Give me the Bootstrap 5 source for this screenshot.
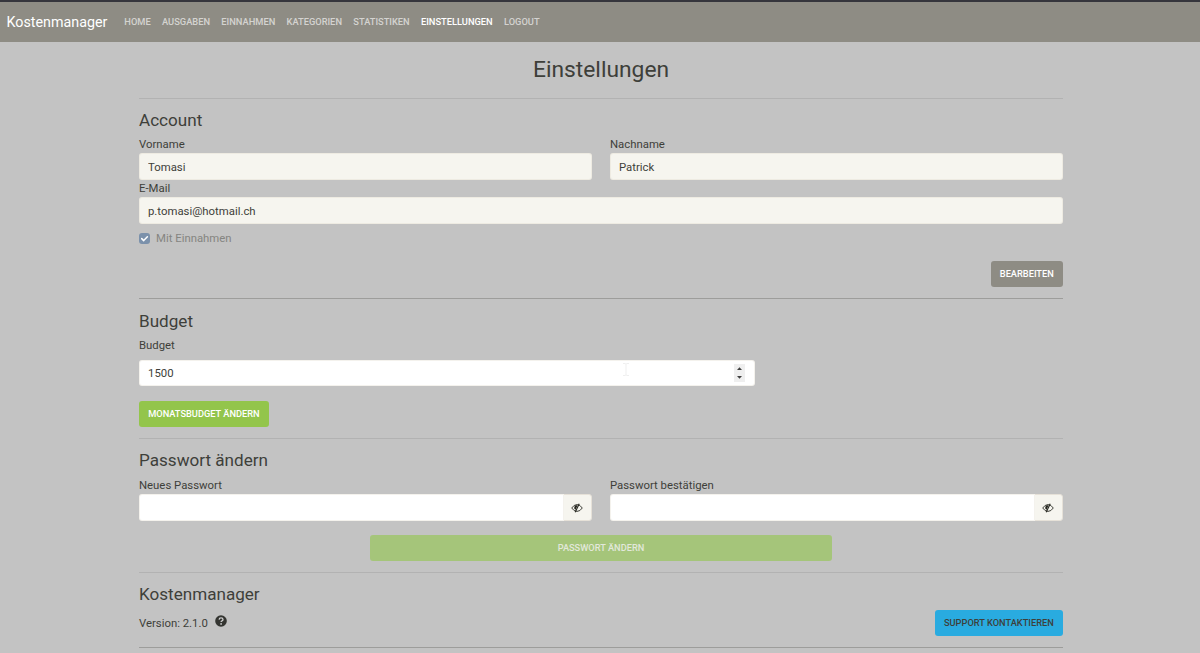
<!DOCTYPE html>
<html lang="de">
<head>
<meta charset="utf-8">
<meta name="viewport" content="width=device-width, initial-scale=1">
<title>Kostenmanager</title>
<link href="https://cdn.jsdelivr.net/npm/bootstrap@5.3.0/dist/css/bootstrap.min.css" rel="stylesheet">
<style>
  html { overflow: hidden; }
  body { font-family: Roboto, "Liberation Sans", sans-serif; font-size: 11.35px; line-height: 17px; color: #3e3f3a; background: #c3c3c3; }
  .topbar { height: 42px; padding: 0 6.5px; background: #8e8c84; border-top: 2px solid #35353c; }
  .topbar .navbar-brand { font-size: 14.3px; line-height: 20px; margin: 0 11.3px 0 0; padding: 0; color: #fff; }
  .topbar.navbar-expand .navbar-nav .nav-link { font-size: 9.3px; font-weight: 500; line-height: 14px; padding: 0 5.65px; color: rgba(255,255,255,.63); text-transform: uppercase; }
  .topbar.navbar-expand .navbar-nav .nav-link.active { color: #fff; }
  .page { width: 924px; margin-left: 139px; }
  h1 { font-size: 22.8px; font-weight: 400; line-height: 28px; padding-top: 14px; margin: 0 0 14px; }
  h2 { font-size: 17.1px; font-weight: 400; line-height: 20px; margin: 0; }
  .rule { height: 1px; margin: 0; border: 0; background: #b2b2b2; opacity: 1; }
  .rule-dark { background: #9d9d9b; }
  .pair { --bs-gutter-x: 18px; }
  label { display: block; line-height: 17px; }
  .form-control { height: 27px; padding: 0 8px; font-size: 11.35px; line-height: 17px; color: #3e3f3a; border: 1px solid #dfd7ca55; border-radius: 3px; background: #fff; }
  .form-control:disabled { background: #f6f5ef; color: #3e3f3a; opacity: 1; }
  input::-webkit-inner-spin-button { display: none; }
  .tick { width: 11px; height: 11px; border-radius: 3px; background: #7b91ab; }
  .btn { height: 26px; padding: 0 8.2px; font-size: 9.25px; font-weight: 500; line-height: 24px; border-radius: 3px; text-transform: uppercase; border-width: 1px; color: #fff; white-space: nowrap; }
  .btn-edit, .btn-edit:hover { background: #8e8c84; color: #fff; }
  .btn-green, .btn-green:disabled { background: #93c54b; color: #fff; border-color: transparent; }
  .btn-green:disabled { background: #a5c57a; color: #e2e8da; opacity: 1; }
  .btn-support { background: #29abe0; color: #3e3f3a; }
  .input-group-text { width: 29px; padding: 0 1px 0 0; border: 1px solid #e6e1d8; border-radius: 3px; background: #f6f5ef; justify-content: center; }
  .budget { width: 616px; height: 26px; }
  .spin { right: 10px; top: 4px; }
  .pointer { left: 483px; top: 3px; }
  .lh-row { height: 26px; }
</style>
</head>
<body>
<nav class="topbar navbar navbar-expand justify-content-start">
  <a class="navbar-brand" href="#">Kostenmanager</a>
  <div class="navbar-nav">
    <a class="nav-link" href="#">Home</a>
    <a class="nav-link" href="#">Ausgaben</a>
    <a class="nav-link" href="#">Einnahmen</a>
    <a class="nav-link" href="#">Kategorien</a>
    <a class="nav-link" href="#">Statistiken</a>
    <a class="nav-link active" href="#">Einstellungen</a>
    <a class="nav-link" href="#">Logout</a>
  </div>
</nav>
<main class="page">
  <h1 class="text-center">Einstellungen</h1>
  <hr class="rule">
  <section style="height:199px">
    <h2 style="padding-top:11px;margin-bottom:6px">Account</h2>
    <div class="row pair">
      <div class="col-6"><label for="vn">Vorname</label><input id="vn" class="form-control" value="Tomasi" disabled></div>
      <div class="col-6"><label for="nn">Nachname</label><input id="nn" class="form-control" value="Patrick" disabled></div>
    </div>
    <label for="em">E-Mail</label>
    <input id="em" class="form-control" value="p.tomasi@hotmail.ch" disabled>
    <div class="d-flex align-items-center" style="margin-top:6px;color:#858581">
      <span class="tick d-flex align-items-center justify-content-center me-1"><svg width="9" height="9" viewBox="0 0 9 9" fill="none" stroke="#fff" stroke-width="1.5" stroke-linecap="round" stroke-linejoin="round"><path d="M1.700 4.600l2 2L7.400 2.800"/></svg></span>
      <span style="margin-left:2px">Mit Einnahmen</span>
    </div>
    <div class="text-end" style="margin-top:14px"><button class="btn btn-edit align-top">Bearbeiten</button></div>
  </section>
  <hr class="rule rule-dark">
  <section style="height:139px">
    <h2 style="padding-top:12px;margin-bottom:6px">Budget</h2>
    <label for="bg">Budget</label>
    <div class="budget position-relative" style="margin-top:6px">
      <input id="bg" type="number" class="form-control budget" value="1500">
      <svg class="spin position-absolute" width="11" height="18" viewBox="0 0 11 18"><path fill="#efefef" d="M0 0h11v18H0z"/><path fill="#404040" d="M3 6l2.500-2.800L8 6zM3 12h5l-2.500 2.800z"/></svg>
      <svg class="pointer position-absolute" width="8" height="13" viewBox="0 0 8 13" fill="none" stroke="#efefef"><path d="M1 .5h2.200l.8.6.8-.6H7M4 1v11M1 12.500h2.200l.8-.6.800.6H7"/></svg>
    </div>
    <button class="btn btn-green d-block" style="margin-top:14.5px">Monatsbudget ändern</button>
  </section>
  <hr class="rule">
  <section style="height:133px">
    <h2 style="padding-top:11px;margin-bottom:7px">Passwort ändern</h2>
    <div class="row pair">
      <div class="col-6"><label for="p1">Neues Passwort</label>
        <div class="input-group"><input id="p1" type="password" class="form-control"><span class="input-group-text"><svg class="eye" width="12" height="10" viewBox="0 0 12 10" fill="none" stroke="#25261f"><path d="M.7 5Q3 1.600 6 1.600T11.300 5Q9 8.400 6 8.400T.7 5z" stroke-width=".9"/><path d="M6.500 2.500A2.300 2.300 0 0 0 4.600 6.800z" fill="#25261f" stroke="none"/><path d="M4.200 9.300L8.200 .7" stroke-width="1.100"/></svg></span></div></div>
      <div class="col-6"><label for="p2">Passwort bestätigen</label>
        <div class="input-group"><input id="p2" type="password" class="form-control"><span class="input-group-text"><svg class="eye" width="12" height="10" viewBox="0 0 12 10" fill="none" stroke="#25261f"><path d="M.7 5Q3 1.600 6 1.600T11.300 5Q9 8.400 6 8.400T.7 5z" stroke-width=".9"/><path d="M6.500 2.500A2.300 2.300 0 0 0 4.600 6.800z" fill="#25261f" stroke="none"/><path d="M4.200 9.300L8.200 .7" stroke-width="1.100"/></svg></span></div></div>
    </div>
    <button class="btn btn-green d-block w-50 mx-auto" style="margin-top:13.500px" disabled>Passwort ändern</button>
  </section>
  <hr class="rule">
  <section style="height:74px">
    <h2 style="padding-top:11px;margin-bottom:6px">Kostenmanager</h2>
    <div class="lh-row d-flex align-items-center">
      <span>Version: 2.1.0</span>
      <svg width="12" height="12" viewBox="0 0 12 12" style="margin:0 0 5px 7px"><circle cx="6" cy="6" r="5.800" fill="#343531"/><path d="M4.100 4.600Q4.200 2.800 6.100 2.800T8 4.400Q8 5.300 6.900 5.900Q6.100 6.300 6.100 7.100" fill="none" stroke="#d0d0d0" stroke-width="1.300"/><circle cx="6.100" cy="8.900" r=".85" fill="#d0d0d0"/></svg>
      <button class="btn btn-support ms-auto">Support kontaktieren</button>
    </div>
  </section>
  <hr class="rule rule-dark">
</main>
<script src="https://cdn.jsdelivr.net/npm/bootstrap@5.3.0/dist/js/bootstrap.bundle.min.js"></script>
</body>
</html>
